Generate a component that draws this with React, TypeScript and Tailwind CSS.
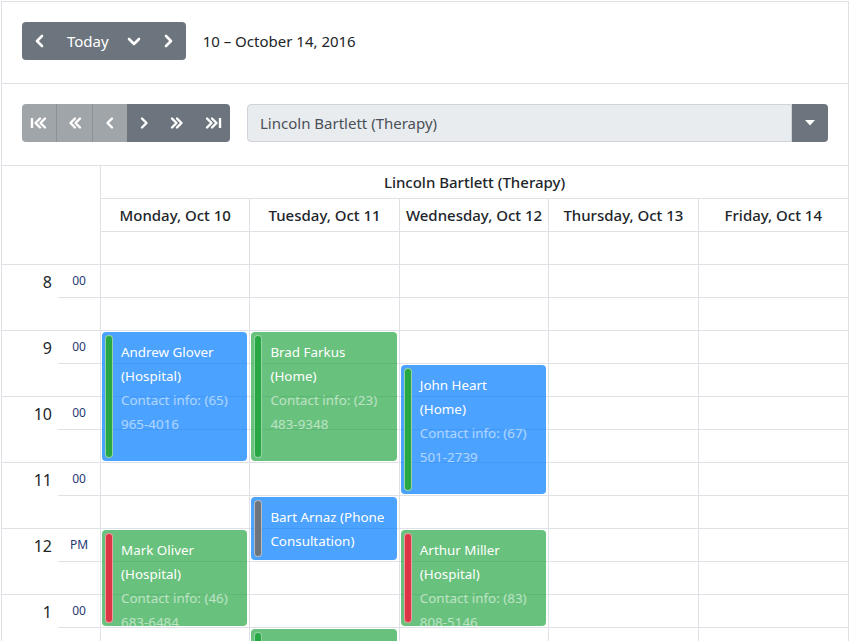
import React from 'react'

const font = { fontFamily: '"Noto Sans", "Open Sans", sans-serif' }

const days = ['Monday, Oct 10', 'Tuesday, Oct 11', 'Wednesday, Oct 12', 'Thursday, Oct 13', 'Friday, Oct 14']

const hours = [
  { h: '8', m: '00' },
  { h: '9', m: '00' },
  { h: '10', m: '00' },
  { h: '11', m: '00' },
  { h: '12', m: 'PM' },
  { h: '1', m: '00' },
  { h: '2', m: '00' },
  { h: '3', m: '00' },
]

interface Appt {
  day: number
  slot: number
  span: number
  title: string
  contact?: string
  kind: 'blue' | 'green'
  bar: 'green' | 'red' | 'gray'
}

const appts: Appt[] = [
  { day: 0, slot: 2, span: 4, title: 'Andrew Glover (Hospital)', contact: 'Contact info: (65) 965-4016', kind: 'blue', bar: 'green' },
  { day: 1, slot: 2, span: 4, title: 'Brad Farkus (Home)', contact: 'Contact info: (23) 483-9348', kind: 'green', bar: 'green' },
  { day: 2, slot: 3, span: 4, title: 'John Heart (Home)', contact: 'Contact info: (67) 501-2739', kind: 'blue', bar: 'green' },
  { day: 1, slot: 7, span: 2, title: 'Bart Arnaz (Phone Consultation)', kind: 'blue', bar: 'gray' },
  { day: 0, slot: 8, span: 3, title: 'Mark Oliver (Hospital)', contact: 'Contact info: (46) 683-6484', kind: 'green', bar: 'red' },
  { day: 2, slot: 8, span: 3, title: 'Arthur Miller (Hospital)', contact: 'Contact info: (83) 808-5146', kind: 'green', bar: 'red' },
  { day: 1, slot: 11, span: 4, title: 'Sandra Johnson (Home)', contact: 'Contact info: (31) 402-7713', kind: 'green', bar: 'green' },
]

function Chev({ dir }: { dir: 'left' | 'right' | 'down' }) {
  const pts = dir === 'left' ? '9,2 4,7 9,12' : dir === 'right' ? '5,2 10,7 5,12' : '2,5 7,10 12,5'
  return (
    <svg width="14" height="14" viewBox="0 0 14 14" fill="none">
      <polyline points={pts} stroke="white" strokeWidth="2.6" strokeLinecap="round" strokeLinejoin="round" />
    </svg>
  )
}

function Double({ dir, bar }: { dir: 'left' | 'right'; bar?: boolean }) {
  return (
    <svg width="18" height="14" viewBox="0 0 18 14" fill="none">
      {dir === 'left' ? (
        <>
          {bar && <line x1="2" y1="2" x2="2" y2="12" stroke="white" strokeWidth="2.4" />}
          <polyline points="10,2.5 5.5,7 10,11.5" stroke="white" strokeWidth="2.4" strokeLinecap="round" strokeLinejoin="round" />
          <polyline points="15,2.5 10.5,7 15,11.5" stroke="white" strokeWidth="2.4" strokeLinecap="round" strokeLinejoin="round" />
        </>
      ) : (
        <>
          <polyline points="3,2.5 7.5,7 3,11.5" stroke="white" strokeWidth="2.4" strokeLinecap="round" strokeLinejoin="round" />
          <polyline points="8,2.5 12.5,7 8,11.5" stroke="white" strokeWidth="2.4" strokeLinecap="round" strokeLinejoin="round" />
          {bar && <line x1="16" y1="2" x2="16" y2="12" stroke="white" strokeWidth="2.4" />}
        </>
      )}
    </svg>
  )
}

function Single({ dir }: { dir: 'left' | 'right' }) {
  return (
    <svg width="14" height="14" viewBox="0 0 14 14" fill="none">
      <polyline
        points={dir === 'left' ? '9,2.5 4.5,7 9,11.5' : '5,2.5 9.5,7 5,11.5'}
        stroke="white"
        strokeWidth="2.4"
        strokeLinecap="round"
        strokeLinejoin="round"
      />
    </svg>
  )
}

function Event({ a }: { a: Appt }) {
  const bg = a.kind === 'blue' ? 'bg-[#007bff]/70' : 'bg-[#28a745]/70'
  const bar = a.bar === 'green' ? 'bg-[#28a745]' : a.bar === 'red' ? 'bg-[#dc3545]' : 'bg-[#6c757d]'
  return (
    <div
      className={`absolute left-px right-[2px] rounded-[4px] overflow-hidden ${bg}`}
      style={{ top: a.slot * 33 + 1, height: a.span * 33 - 3 }}
    >
      <div className={`absolute left-[3px] top-[3px] bottom-[3px] w-[8px] rounded-full border border-white/50 ${bar}`} />
      <div className="ml-[19px] w-[116px] pt-[8px] text-[13.4px] leading-[24px] text-white">
        <div>{a.title}</div>
        {a.contact && <div className="text-white/55">{a.contact}</div>}
      </div>
    </div>
  )
}

export default function App() {
  const slots = hours.length * 2
  return (
    <div className="bg-white text-[#212529] min-h-screen" style={font}>
      <div className="ml-px mt-px w-[848px] border border-[#dee2e6]">
        {/* top toolbar */}
        <div className="flex items-center gap-[17px] px-5 pt-5 pb-[23px] border-b border-[#dee2e6]">
          <div className="flex h-[38px] rounded-[4px] bg-[#6c757d] text-white">
            <button className="w-[36px] flex items-center justify-center"><Chev dir="left" /></button>
            <button className="px-[9px] text-[15px]">Today</button>
            <button className="w-[33px] flex items-center justify-center"><Chev dir="down" /></button>
            <button className="w-[35px] flex items-center justify-center"><Chev dir="right" /></button>
          </div>
          <div className="text-[15px]">10 – October 14, 2016</div>
        </div>

        {/* resource toolbar */}
        <div className="flex items-center gap-[17px] px-5 pt-5 pb-[23px] border-b border-[#dee2e6]">
          <div className="flex h-[38px] w-[208px] rounded-[4px] overflow-hidden">
            <button className="flex-1 flex items-center justify-center bg-[#a0a5aa] border-r border-[#8a9197]"><Double dir="left" bar /></button>
            <button className="flex-1 flex items-center justify-center bg-[#a0a5aa] border-r border-[#8a9197]"><Double dir="left" /></button>
            <button className="flex-1 flex items-center justify-center bg-[#a0a5aa]"><Single dir="left" /></button>
            <button className="flex-1 flex items-center justify-center bg-[#6c757d]"><Single dir="right" /></button>
            <button className="flex-1 flex items-center justify-center bg-[#6c757d]"><Double dir="right" /></button>
            <button className="flex-1 flex items-center justify-center bg-[#6c757d]"><Double dir="right" bar /></button>
          </div>
          <div className="flex flex-1 h-[38px]">
            <div className="flex-1 flex items-center px-3 bg-[#e9ecef] border border-[#ced4da] rounded-l-[4px] text-[15px] text-[#495057]">
              Lincoln Bartlett (Therapy)
            </div>
            <div className="w-[36px] flex items-center justify-center bg-[#6c757d] rounded-r-[4px]">
              <svg width="10" height="6" viewBox="0 0 10 6"><polygon points="0,0 10,0 5,5.5" fill="white" /></svg>
            </div>
          </div>
        </div>

        {/* header */}
        <div className="grid grid-cols-[99px_1fr]">
          <div className="border-r border-b border-[#dee2e6]" />
          <div>
            <div className="h-[33px] border-b border-[#dee2e6] flex items-center justify-center text-[15px] font-medium">
              Lincoln Bartlett (Therapy)
            </div>
            <div className="grid grid-cols-5 h-[33px] border-b border-[#dee2e6]">
              {days.map((d, i) => (
                <div key={d} className={`flex items-center justify-center text-[15px] font-medium ${i < 4 ? 'border-r border-[#dee2e6]' : ''}`}>
                  {d}
                </div>
              ))}
            </div>
            <div className="grid grid-cols-5 h-[33px] border-b border-[#dee2e6]">
              {days.map((d, i) => (
                <div key={d} className={i < 4 ? 'border-r border-[#dee2e6]' : ''} />
              ))}
            </div>
          </div>
        </div>

        {/* body */}
        <div className="grid grid-cols-[99px_1fr]">
          <div className="border-r border-[#dee2e6]">
            {hours.map((h) => (
              <div key={h.h} className="flex h-[66px] border-b border-[#dee2e6]">
                <div className="w-[56px] h-[33px] flex items-center justify-end pr-[6px] text-[16px]">{h.h}</div>
                <div className="flex-1 flex flex-col">
                  <div className="h-[33px] border-b border-[#dee2e6] flex items-center justify-center text-[12px] text-[#1f3a74]">{h.m}</div>
                </div>
              </div>
            ))}
          </div>
          <div className="grid grid-cols-5">
            {days.map((d, di) => (
              <div key={d} className={`relative ${di < 4 ? 'border-r border-[#dee2e6]' : ''}`}>
                {Array.from({ length: slots }).map((_, i) => (
                  <div key={i} className="h-[33px] border-b border-[#dee2e6]" />
                ))}
                {appts.filter((a) => a.day === di).map((a) => (
                  <Event key={a.title} a={a} />
                ))}
              </div>
            ))}
          </div>
        </div>
      </div>
    </div>
  )
}
